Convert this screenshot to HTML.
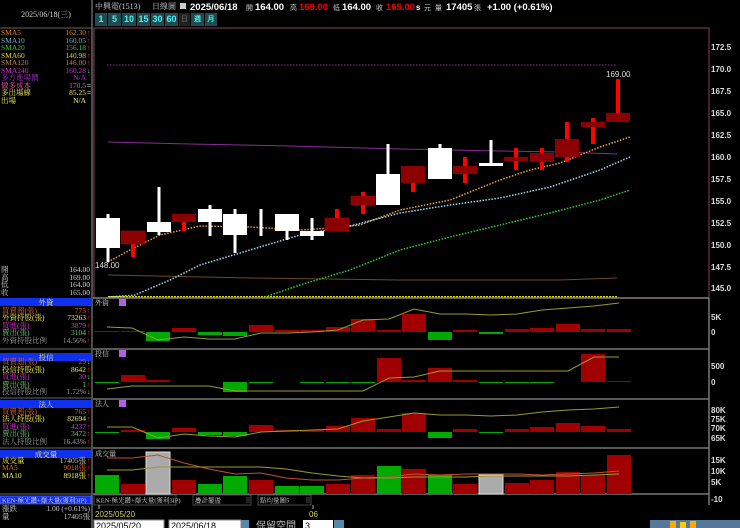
<!DOCTYPE html>
<html><head><meta charset="utf-8"><style>
*{margin:0;padding:0}
body{width:740px;height:528px;background:#000;overflow:hidden;position:relative;font-family:"Liberation Sans","Noto Sans CJK TC",sans-serif}
.btn{position:absolute;top:13px;height:13px;background:#1e4a50;color:#5ee;font:bold 9px "Liberation Sans",sans-serif;text-align:center;line-height:13px}
.sf text{font-family:"Liberation Serif","Noto Serif CJK SC",serif}
</style></head><body>
<svg width="740" height="528" style="position:absolute;left:0;top:0" font-family="Liberation Sans, Noto Sans CJK TC, sans-serif">
<rect x="0" y="0" width="92" height="528" fill="#000"/>
<line x1="92" y1="0" x2="92" y2="528" stroke="#666" stroke-width="1.5"/>
<line x1="0" y1="28" x2="92" y2="28" stroke="#666"/>
<g class="sf">
<text x="46" y="17" fill="#ccc" font-size="8" text-anchor="middle">2025/06/18(三)</text>
<g font-size="7.5">
<text x="1" y="35" fill="#e08020">SMA5</text><text x="86" y="35" fill="#e08020" text-anchor="end">162.30</text>
<text x="1" y="43" fill="#7ac">SMA10</text><text x="86" y="43" fill="#7ac" text-anchor="end">160.05</text>
<text x="1" y="50" fill="#3c3">SMA20</text><text x="86" y="50" fill="#3c3" text-anchor="end">156.18</text>
<text x="1" y="58" fill="#dd0">SMA60</text><text x="86" y="58" fill="#dd0" text-anchor="end">140.98</text>
<text x="1" y="65" fill="#b85">SMA120</text><text x="86" y="65" fill="#b85" text-anchor="end">146.00</text>
<text x="1" y="73" fill="#c3c">SMA240</text><text x="86" y="73" fill="#c3c" text-anchor="end">160.28</text>
<text x="1" y="80" fill="#a3d">多方進場價</text><text x="86" y="80" fill="#a3d" text-anchor="end">N/A</text>
<text x="1" y="88" fill="#f5a">做多成本</text><text x="86" y="88" fill="#f5a" text-anchor="end">170.5</text>
<text x="1" y="95" fill="#ee6">多出場線</text><text x="86" y="95" fill="#ee6" text-anchor="end">85.25</text>
<text x="1" y="103" fill="#ee6">出場</text><text x="86" y="103" fill="#ee6" text-anchor="end">N/A</text>
</g>
<g font-size="7.5" fill="#ccc">
<text x="1" y="272">開</text><text x="90" y="272" text-anchor="end">164.00</text>
<text x="1" y="280">高</text><text x="90" y="280" text-anchor="end">169.00</text>
<text x="1" y="287">低</text><text x="90" y="287" text-anchor="end">164.00</text>
<text x="1" y="295">收</text><text x="90" y="295" text-anchor="end">165.00</text>
</g>
</g>
<g fill="#f22" font-size="7"><text x="87" y="35">↑</text><text x="87" y="43">↑</text><text x="87" y="50">↑</text><text x="87" y="58">↑</text><text x="87" y="65">↑</text><text x="87" y="88" fill="#ccc">=</text><text x="87" y="95" fill="#ccc">=</text></g>
<text x="87" y="73" fill="#3f3" font-size="7">↓</text>
<rect x="0" y="298" width="91" height="8" fill="#1030f0"/>
<rect x="0" y="353" width="91" height="8" fill="#1030f0"/>
<rect x="0" y="400" width="91" height="8" fill="#1030f0"/>
<rect x="0" y="450" width="91" height="8" fill="#1030f0"/>
<rect x="0" y="496" width="91" height="8" fill="#1030f0" stroke="#88f" stroke-width=".5"/>
<g stroke="#666"><line x1="0" y1="349" x2="92" y2="349"/><line x1="0" y1="398" x2="92" y2="398"/><line x1="0" y1="448" x2="92" y2="448"/><line x1="0" y1="494" x2="92" y2="494"/></g>
<g class="sf">
<text x="46" y="305" fill="#ee6" font-size="7.5" text-anchor="middle">外資</text>
<text x="46" y="360" fill="#ee6" font-size="7.5" text-anchor="middle">投信</text>
<text x="46" y="407" fill="#ee6" font-size="7.5" text-anchor="middle">法人</text>
<text x="46" y="457" fill="#ee6" font-size="7.5" text-anchor="middle">成交量</text>
<text x="2" y="502.5" fill="#ddd" font-size="6.5">KEN-極光鑽+爆大量(獲利3IP)</text>
<g font-size="7.5">
<text x="2" y="313" fill="#e06030">買賣超(張)</text><text x="86" y="313" fill="#e06030" text-anchor="end">775</text>
<text x="2" y="320" fill="#ee5">外資持股(張)</text><text x="86" y="320" fill="#ee5" text-anchor="end">73263</text>
<text x="2" y="328" fill="#d3d">買進(張)</text><text x="86" y="328" fill="#d3d" text-anchor="end">3879</text>
<text x="2" y="335" fill="#6c6">賣出(張)</text><text x="86" y="335" fill="#6c6" text-anchor="end">3104</text>
<text x="2" y="343" fill="#999">外資持股比例</text><text x="86" y="343" fill="#999" text-anchor="end">14.56%</text>
<text x="2" y="364" fill="#e06030">買賣超(張)</text><text x="86" y="364" fill="#e06030" text-anchor="end">29</text>
<text x="2" y="372" fill="#ee5">投信持股(張)</text><text x="86" y="372" fill="#ee5" text-anchor="end">8642</text>
<text x="2" y="379" fill="#d3d">買進(張)</text><text x="86" y="379" fill="#d3d" text-anchor="end">30</text>
<text x="2" y="387" fill="#6c6">賣出(張)</text><text x="86" y="387" fill="#6c6" text-anchor="end">1</text>
<text x="2" y="394" fill="#999">投信持股比例</text><text x="86" y="394" fill="#999" text-anchor="end">1.72%</text>
<text x="2" y="414" fill="#e06030">買賣超(張)</text><text x="86" y="414" fill="#e06030" text-anchor="end">765</text>
<text x="2" y="421" fill="#ee5">法人持股(張)</text><text x="86" y="421" fill="#ee5" text-anchor="end">82694</text>
<text x="2" y="429" fill="#d3d">買進(張)</text><text x="86" y="429" fill="#d3d" text-anchor="end">4237</text>
<text x="2" y="436" fill="#6c6">賣出(張)</text><text x="86" y="436" fill="#6c6" text-anchor="end">3472</text>
<text x="2" y="444" fill="#999">法人持股比例</text><text x="86" y="444" fill="#999" text-anchor="end">16.43%</text>
<text x="2" y="463" fill="#ee5">成交量</text><text x="86" y="463" fill="#ccc" text-anchor="end">17405張</text>
<text x="2" y="470" fill="#e06030">MA5</text><text x="86" y="470" fill="#e06030" text-anchor="end">9018張</text>
<text x="2" y="478" fill="#ee5">MA10</text><text x="86" y="478" fill="#ee5" text-anchor="end">8918張</text>
<text x="2" y="511" fill="#ccc">漲跌</text><text x="90" y="511" fill="#ccc" text-anchor="end">1.00 (+0.61%)</text>
<text x="2" y="519" fill="#ccc">量</text><text x="90" y="519" fill="#ccc" text-anchor="end">17405張</text>
</g>
</g>
<g fill="#f22" font-size="7"><text x="87" y="313">↑</text><text x="87" y="320">↑</text><text x="87" y="328">↑</text><text x="87" y="335">↑</text><text x="87" y="343">↑</text>
<text x="87" y="372">↑</text><text x="87" y="387">↑</text><text x="87" y="414">↑</text><text x="87" y="421">↑</text><text x="87" y="429">↑</text><text x="87" y="436">↑</text><text x="87" y="444">↑</text><text x="87" y="463">↑</text><text x="87" y="470">↑</text><text x="87" y="478">↑</text></g>
<g fill="#3f3" font-size="7"><text x="87" y="364">↓</text><text x="87" y="379">↓</text><text x="87" y="394">↓</text></g>

<g class="sf"><text x="95" y="9" font-size="8" fill="#ccc">中興電(1513)</text>
<text x="152" y="9" font-size="8" fill="#ccc">日線圖</text></g>
<rect x="180" y="3" width="6" height="6" fill="#ccc"/>
<g font-size="9.5" font-weight="bold">
<text x="190" y="10" fill="#fff">2025/06/18</text>
<text x="246" y="10" fill="#ccc" font-size="7" font-weight="normal">開</text><text x="255" y="10" fill="#fff">164.00</text>
<text x="290" y="10" fill="#ccc" font-size="7" font-weight="normal">高</text><text x="299" y="10" fill="#e00">169.00</text>
<text x="333" y="10" fill="#ccc" font-size="7" font-weight="normal">低</text><text x="342" y="10" fill="#fff">164.00</text>
<text x="376" y="10" fill="#ccc" font-size="7" font-weight="normal">收</text><text x="386" y="10" fill="#e00">165.00</text>
<text x="416" y="10" fill="#fff" font-size="8">s</text><text x="424" y="10" fill="#ccc" font-size="7" font-weight="normal">元</text>
<text x="435" y="10" fill="#ccc" font-size="7" font-weight="normal">量</text><text x="446" y="10" fill="#fff">17405</text>
<text x="474" y="10" fill="#ccc" font-size="7" font-weight="normal">張</text>
<text x="487" y="10" fill="#fff">+1.00 (+0.61%)</text>
</g>

<rect x="94" y="28" width="615" height="270" fill="none" stroke="#5a2a3a" stroke-width="1.5"/>
<g font-size="8" fill="#ddd" font-weight="bold">
<text x="711" y="50">172.5</text><text x="711" y="72">170.0</text><text x="711" y="94">167.5</text><text x="711" y="116">165.0</text><text x="711" y="138">162.5</text><text x="711" y="160">160.0</text><text x="711" y="182">157.5</text><text x="711" y="204">155.0</text><text x="711" y="226">152.5</text><text x="711" y="248">150.0</text><text x="711" y="270">147.5</text><text x="711" y="291">145.0</text>
</g>
<line x1="107" y1="65" x2="617" y2="65" stroke="#a020a0" stroke-dasharray="1.5,1.5"/>
<polyline points="108,142 190,144 290,146 400,149 500,151 560,152 617,154" fill="none" stroke="#8a2a9a" stroke-width="1"/>
<polyline points="108,275 250,278 400,280 560,280 617,278" fill="none" stroke="#6a4a2a"/>
<line x1="108" y1="297" x2="617" y2="297" stroke="#dd0" stroke-dasharray="2,1" stroke-width="2"/>
<polyline points="108,262 130,250 160,235 200,226 250,227 300,230 330,228 360,225 400,210 450,200 500,180 530,170 560,163 600,147 630,137" fill="none" stroke="#f0a040" stroke-dasharray="1.5,1.5" stroke-width="1.5"/>
<polyline points="110,297 135,295 170,280 200,265 250,250 300,235 350,226 400,213 450,205 500,198 550,187 600,170 630,157" fill="none" stroke="#9de" stroke-dasharray="1.5,1.5" stroke-width="1.5"/>
<polyline points="265,297 300,285 350,270 400,250 450,237 500,225 550,213 600,200 630,190" fill="none" stroke="#3c3" stroke-dasharray="1.5,1.5" stroke-width="1.5"/>
<g>
<rect x="106.5" y="214" width="3" height="48" fill="#fff"/><rect x="96" y="218" width="24" height="30" fill="#fff"/>
<rect x="131" y="231" width="4" height="26" fill="#f00"/><rect x="121" y="231" width="24" height="13" fill="#8b0000" stroke="#b00" stroke-width=".5"/>
<rect x="157.5" y="187" width="3" height="48" fill="#fff"/><rect x="147" y="222" width="24" height="10" fill="#fff"/>
<rect x="182" y="214" width="4" height="17" fill="#f00"/><rect x="172" y="214" width="24" height="8" fill="#8b0000"/>
<rect x="208.5" y="205" width="3" height="31" fill="#fff"/><rect x="198" y="209" width="24" height="13" fill="#fff"/>
<rect x="233.5" y="209" width="3" height="44" fill="#fff"/><rect x="223" y="214" width="24" height="21" fill="#fff"/>
<rect x="259.5" y="209" width="3" height="27" fill="#fff"/>
<rect x="285.5" y="214" width="3" height="26" fill="#fff"/><rect x="275" y="214" width="24" height="17" fill="#fff"/>
<rect x="310.5" y="218" width="3" height="22" fill="#fff"/><rect x="300" y="231" width="24" height="5" fill="#fff"/>
<rect x="335" y="209" width="4" height="22" fill="#f00"/><rect x="325" y="218" width="24" height="13" fill="#8b0000" stroke="#b00" stroke-width=".5"/>
<rect x="361" y="192" width="4" height="22" fill="#f00"/><rect x="351" y="196" width="24" height="9" fill="#8b0000" stroke="#b00" stroke-width=".5"/>
<rect x="386.5" y="144" width="3" height="61" fill="#fff"/><rect x="376" y="174" width="24" height="31" fill="#fff"/>
<rect x="411" y="166" width="4" height="26" fill="#f00"/><rect x="401" y="166" width="24" height="17" fill="#8b0000"/>
<rect x="438.5" y="144" width="3" height="35" fill="#fff"/><rect x="428" y="148" width="24" height="31" fill="#fff"/>
<rect x="463" y="157" width="4" height="26" fill="#f00"/><rect x="453" y="166" width="24" height="8" fill="#8b0000"/>
<rect x="489.5" y="140" width="3" height="26" fill="#fff"/><rect x="479" y="163" width="24" height="3" fill="#fff"/>
<rect x="514" y="148" width="4" height="22" fill="#f00"/><rect x="504" y="157" width="24" height="4" fill="#8b0000"/>
<rect x="540" y="148" width="4" height="22" fill="#f00"/><rect x="530" y="153" width="24" height="9" fill="#8b0000"/>
<rect x="565" y="122" width="4" height="40" fill="#f00"/><rect x="555" y="139" width="24" height="18" fill="#8b0000"/>
<rect x="591" y="118" width="4" height="26" fill="#f00"/><rect x="581" y="122" width="24" height="5" fill="#8b0000"/>
<rect x="616" y="79" width="4" height="43" fill="#f00"/><rect x="606" y="113" width="24" height="9" fill="#8b0000"/>
</g>
<text x="606" y="77" font-size="8" fill="#ddd">169.00</text>
<text x="95" y="268" font-size="8" fill="#ddd">148.00</text>

<g stroke="#777" stroke-width="1.5"><line x1="93" y1="298" x2="709" y2="298"/><line x1="93" y1="349" x2="709" y2="349"/><line x1="93" y1="399" x2="709" y2="399"/><line x1="93" y1="448" x2="709" y2="448"/><line x1="93" y1="494" x2="709" y2="494"/><line x1="709" y1="298" x2="709" y2="505"/></g>
<g class="sf" font-size="7" fill="#ccc"><text x="95" y="305">外資</text><text x="95" y="356">投信</text><text x="95" y="406">法人</text><text x="95" y="456">成交量</text></g>
<g fill="#b060e0"><rect x="119" y="299" width="7" height="7"/><rect x="119" y="350" width="7" height="7"/><rect x="119" y="400" width="7" height="7"/></g>
<g font-size="8" fill="#ddd" font-weight="bold">
<text x="711" y="320">5K</text><text x="711" y="335">0</text>
<text x="711" y="369">500</text><text x="711" y="385">0</text>
<text x="711" y="413">80K</text><text x="711" y="422">75K</text><text x="711" y="431">70K</text><text x="711" y="441">65K</text>
<text x="711" y="463">15K</text><text x="711" y="474">10K</text><text x="711" y="485">5K</text><text x="711" y="502">-10</text>
</g>
<g fill="#a00000">
<rect x="95" y="331" width="24" height="1"/><rect x="121" y="331" width="24" height="1"/><rect x="172" y="328" width="24" height="4"/><rect x="249" y="325" width="24" height="7"/><rect x="275" y="330" width="24" height="2"/><rect x="300" y="330" width="24" height="2"/><rect x="326" y="327" width="24" height="5"/><rect x="351" y="319" width="24" height="13"/><rect x="377" y="330" width="24" height="2"/><rect x="402" y="314" width="24" height="18"/><rect x="453" y="330" width="24" height="2"/><rect x="505" y="329" width="24" height="3"/><rect x="530" y="328" width="24" height="4"/><rect x="556" y="324" width="24" height="8"/><rect x="581" y="329" width="24" height="3"/><rect x="607" y="329" width="24" height="3"/>
</g>
<g fill="#0a0"><rect x="146" y="332" width="24" height="9"/><rect x="198" y="332" width="24" height="3"/><rect x="223" y="332" width="24" height="4"/><rect x="428" y="332" width="24" height="8"/><rect x="479" y="332" width="24" height="2"/></g>
<polyline points="107,327 132,328 158,340 184,337 209,339 235,339 261,333 286,333 312,332 338,330 363,320 389,319 414,309 440,314 466,314 491,315 517,314 542,310 568,308 594,306 619,303" fill="none" stroke="#9a9a30"/>
<g fill="#a00000"><rect x="121" y="375" width="24" height="7"/><rect x="146" y="380" width="24" height="2"/><rect x="377" y="358" width="24" height="24"/><rect x="402" y="380" width="24" height="2"/><rect x="428" y="368" width="24" height="14"/><rect x="453" y="380" width="24" height="2"/><rect x="581" y="354" width="24" height="28"/><rect x="607" y="381" width="24" height="1"/></g>
<g fill="#0a0"><rect x="95" y="382" width="24" height="1"/><rect x="223" y="382" width="24" height="10"/><rect x="249" y="382" width="24" height="1"/><rect x="300" y="382" width="24" height="1"/><rect x="326" y="382" width="24" height="1"/><rect x="351" y="382" width="24" height="1"/><rect x="479" y="382" width="24" height="1"/><rect x="505" y="382" width="24" height="1"/><rect x="530" y="382" width="24" height="1"/></g>
<polyline points="107,389 132,386 158,386 184,386 209,386 235,391 261,391 286,391 312,391 338,391 363,391 389,378 414,377 440,371 466,371 491,371 517,371 542,371 568,371 594,357 619,357" fill="none" stroke="#9a9a30"/>
<g fill="#a00000"><rect x="121" y="430" width="24" height="2"/><rect x="172" y="428" width="24" height="4"/><rect x="249" y="425" width="24" height="7"/><rect x="275" y="430" width="24" height="2"/><rect x="300" y="430" width="24" height="2"/><rect x="326" y="426" width="24" height="6"/><rect x="351" y="418" width="24" height="14"/><rect x="377" y="429" width="24" height="3"/><rect x="402" y="413" width="24" height="19"/><rect x="453" y="429" width="24" height="3"/><rect x="505" y="429" width="24" height="3"/><rect x="530" y="427" width="24" height="5"/><rect x="556" y="423" width="24" height="9"/><rect x="581" y="426" width="24" height="6"/><rect x="607" y="429" width="24" height="3"/></g>
<g fill="#0a0"><rect x="95" y="432" width="24" height="1"/><rect x="146" y="432" width="24" height="7"/><rect x="198" y="432" width="24" height="3"/><rect x="223" y="432" width="24" height="4"/><rect x="428" y="432" width="24" height="6"/><rect x="479" y="432" width="24" height="1"/></g>
<polyline points="107,427 132,427 158,438 184,434 209,436 235,437 261,432 286,431 312,430 338,429 363,421 389,417 414,413 440,415 466,415 491,416 517,415 542,412 568,410 594,409 619,407" fill="none" stroke="#9a9a30"/>
<g>
<rect x="95" y="475" width="24" height="19" fill="#0a0"/><rect x="121" y="484" width="24" height="10" fill="#a00000"/><rect x="146" y="452" width="24" height="42" fill="#aaa" stroke="#ddd"/><rect x="172" y="480" width="24" height="14" fill="#a00000"/><rect x="198" y="484" width="24" height="10" fill="#0a0"/><rect x="223" y="476" width="24" height="18" fill="#0a0"/><rect x="249" y="480" width="24" height="14" fill="#a00000"/><rect x="275" y="486" width="24" height="8" fill="#0a0"/><rect x="300" y="486" width="24" height="8" fill="#0a0"/><rect x="326" y="484" width="24" height="10" fill="#a00000"/><rect x="351" y="475" width="24" height="19" fill="#a00000"/><rect x="377" y="466" width="24" height="28" fill="#0a0"/><rect x="402" y="469" width="24" height="25" fill="#a00000"/><rect x="428" y="475" width="24" height="19" fill="#0a0"/><rect x="453" y="484" width="24" height="10" fill="#a00000"/><rect x="479" y="475" width="24" height="19" fill="#aaa" stroke="#ddd"/><rect x="505" y="483" width="24" height="11" fill="#a00000"/><rect x="530" y="480" width="24" height="14" fill="#a00000"/><rect x="556" y="472" width="24" height="22" fill="#a00000"/><rect x="581" y="475" width="24" height="19" fill="#a00000"/><rect x="607" y="455" width="24" height="39" fill="#a00000"/>
</g>
<polyline points="107,458 132,458 158,455 184,463 209,469 235,474 261,473 286,478 312,480 338,480 363,478 389,477 414,474 440,475 466,474 491,474 517,474 542,475 568,474 594,473 619,471" fill="none" stroke="#c05030"/>
<polyline points="107,470 132,470 158,467 184,467 209,467 235,467 261,467 286,469 312,473 338,476 363,478 389,478 414,477 440,477 466,477 491,476 517,476 542,476 568,476 594,475 619,474" fill="none" stroke="#9a9a30"/>
<rect x="94" y="495" width="82" height="10" fill="#000" stroke="#666" stroke-width=".7"/>
<rect x="193" y="495" width="58" height="10" fill="#000" stroke="#666" stroke-width=".7"/><rect x="246" y="497" width="4" height="6" fill="#222"/>
<rect x="258" y="495" width="53" height="10" fill="#000" stroke="#666" stroke-width=".7"/><rect x="306" y="497" width="4" height="6" fill="#222"/>
<g class="sf" font-size="6.5" fill="#ccc"><text x="96" y="502.5">KEN-極光鑽+爆大量(獲利3IP)</text><text x="195" y="502.5">疊計擺盪</text><text x="260" y="502.5">點均量圖5</text></g>
<line x1="99" y1="505" x2="99" y2="509" stroke="#aaa"/><line x1="313" y1="505" x2="313" y2="509" stroke="#aaa"/>
<text x="95" y="517" font-size="8" fill="#cc6">2025/05/20</text><text x="309" y="517" font-size="8" fill="#cc6">06</text>
<rect x="94" y="520" width="70" height="10" fill="#fff" stroke="#888"/><text x="96" y="529" font-size="9" fill="#000">2025/05/20</text>
<rect x="169" y="520" width="72" height="10" fill="#fff" stroke="#888"/><text x="171" y="529" font-size="9" fill="#000">2025/06/18</text>
<rect x="241" y="520" width="8" height="10" fill="#58a"/>
<text x="256" y="529" font-size="10" fill="#bbb">保留空間</text>
<rect x="303" y="520" width="30" height="10" fill="#fff"/><text x="305" y="529" font-size="9" fill="#000">3</text>
<rect x="334" y="520" width="10" height="10" fill="#58a"/>
<rect x="650" y="520" width="90" height="8" fill="#579"/>
<rect x="670" y="521" width="6" height="7" fill="#fa0"/><rect x="680" y="522" width="6" height="6" fill="#fc0"/><rect x="690" y="521" width="6" height="7" fill="#fa0"/>
</svg>
<div class="btn" style="left:95px;width:12px">1</div>
<div class="btn" style="left:108px;width:13px">5</div>
<div class="btn" style="left:122px;width:14px">10</div>
<div class="btn" style="left:137px;width:13px">15</div>
<div class="btn" style="left:151px;width:13px">30</div>
<div class="btn" style="left:165px;width:13px">60</div>
<div class="btn" style="left:179px;width:11px;background:#222;color:#555;font-size:7px">日</div>
<div class="btn" style="left:191px;width:13px;font-size:7px">週</div>
<div class="btn" style="left:205px;width:12px;font-size:7px">月</div>
</body></html>
